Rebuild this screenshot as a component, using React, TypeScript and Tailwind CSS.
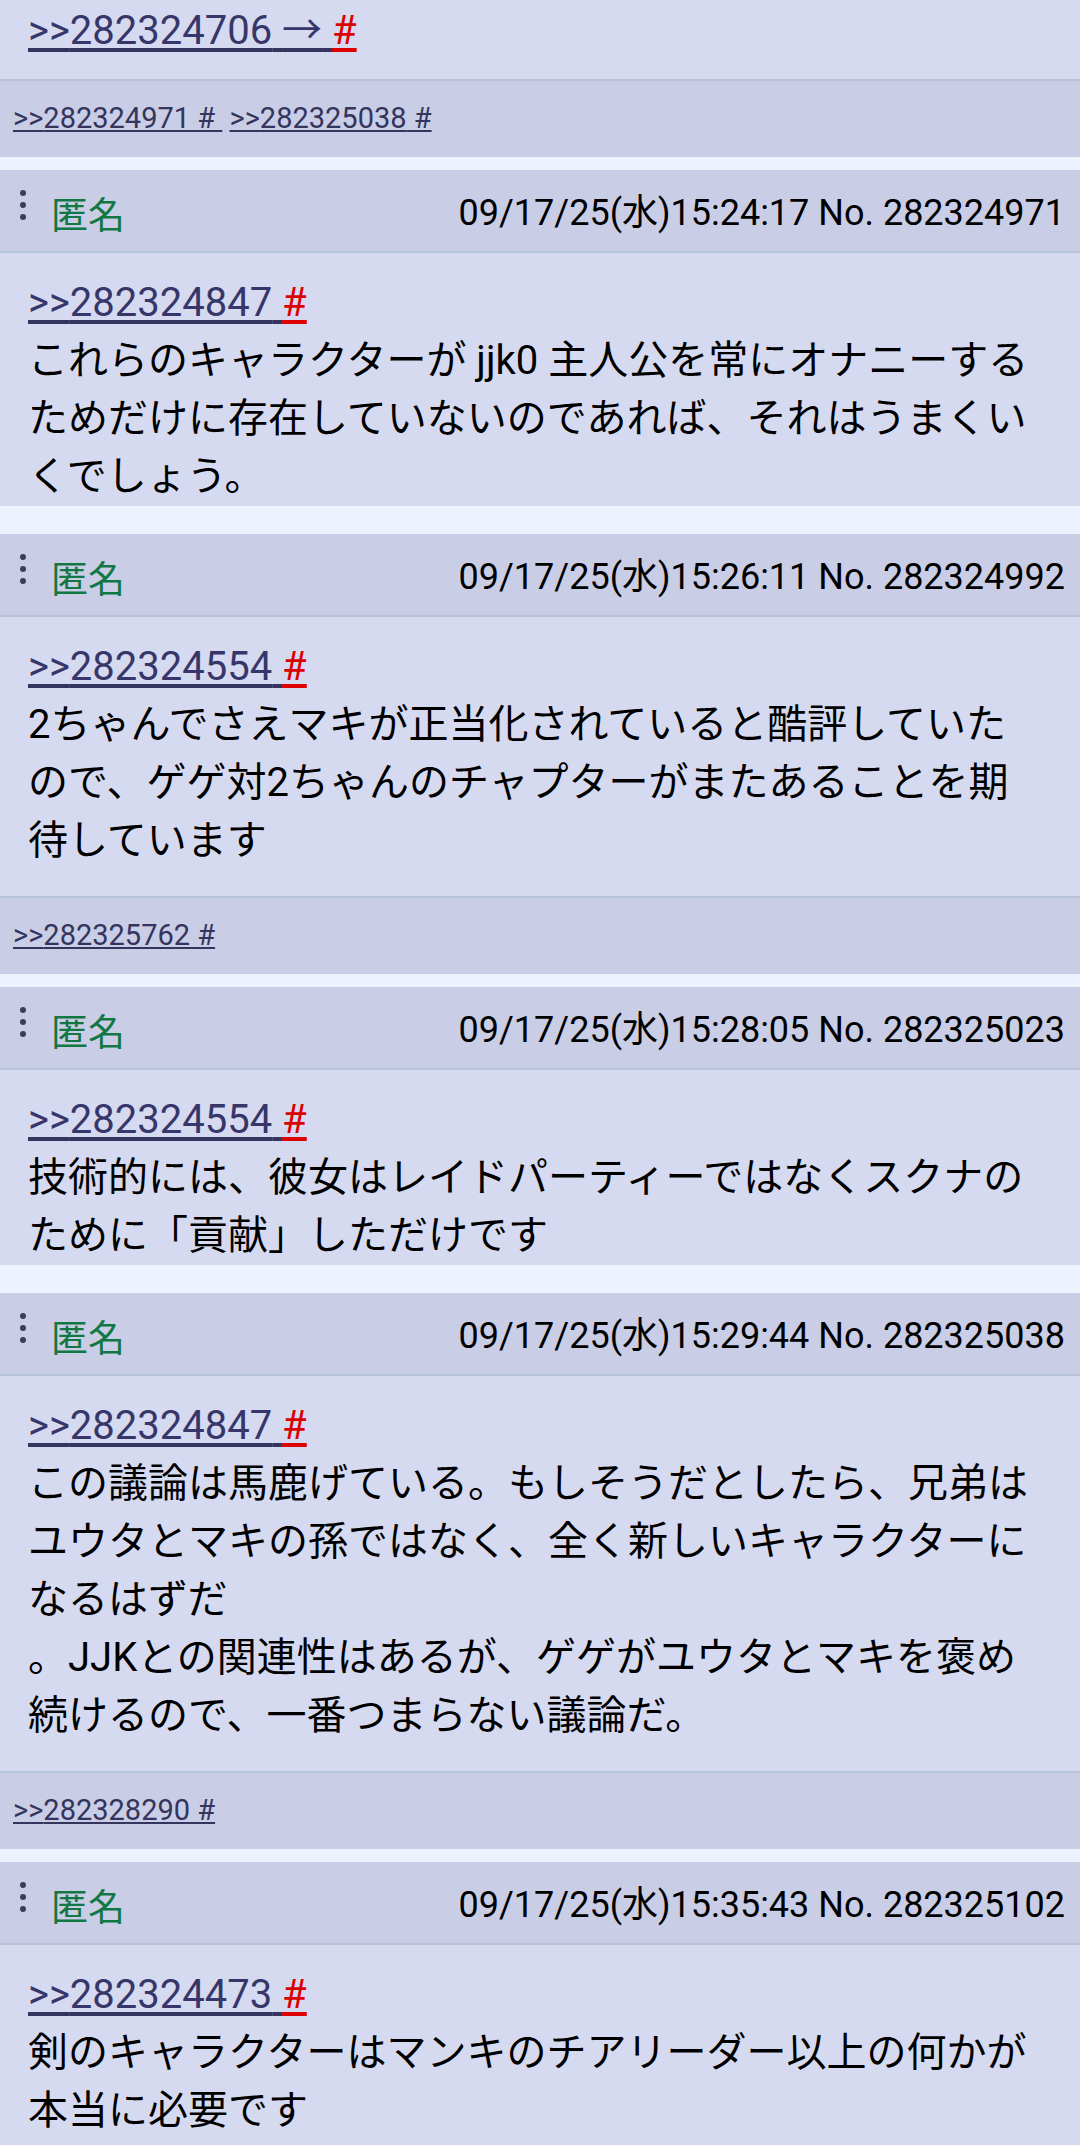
import React from "react";

type Post = {
  no: string;
  time: string;
  quote: string;
  lines: React.ReactNode;
  backlinks?: string[];
};

const posts: Post[] = [
  {
    no: "282324971",
    time: "09/17/25(水)15:24:17",
    quote: "282324847",
    lines: "これらのキャラクターが jjk0 主人公を常にオナニーするためだけに存在していないのであれば、それはうまくいくでしょう。",
  },
  {
    no: "282324992",
    time: "09/17/25(水)15:26:11",
    quote: "282324554",
    lines: "2ちゃんでさえマキが正当化されていると酷評していたので、ゲゲ対2ちゃんのチャプターがまたあることを期待しています",
    backlinks: ["282325762"],
  },
  {
    no: "282325023",
    time: "09/17/25(水)15:28:05",
    quote: "282324554",
    lines: "技術的には、彼女はレイドパーティーではなくスクナのために「貢献」しただけです",
  },
  {
    no: "282325038",
    time: "09/17/25(水)15:29:44",
    quote: "282324847",
    lines: (
      <>
        この議論は馬鹿げている。もしそうだとしたら、兄弟はユウタとマキの孫ではなく、全く新しいキャラクターになるはずだ
        <br />
        。JJKとの関連性はあるが、ゲゲがユウタとマキを褒め続けるので、一番つまらない議論だ。
      </>
    ),
    backlinks: ["282328290"],
  },
  {
    no: "282325102",
    time: "09/17/25(水)15:35:43",
    quote: "282324473",
    lines: "剣のキャラクターはマンキのチアリーダー以上の何かが本当に必要です",
  },
];

function QuoteLine({ id, arrow }: { id: string; arrow?: boolean }) {
  return (
    <div className="text-[40px] leading-[58px] whitespace-nowrap">
      <span className="text-[#36366a] underline decoration-4 underline-offset-4 decoration-[#34345c]">
        &gt;&gt;{id}
        {arrow ? (
          <>
            {" "}
            <span className="font-['Noto_Sans_CJK_JP',sans-serif]">→</span>
          </>
        ) : null}
        {"\u00a0"}
      </span>
      <span className="text-[#dd0000] underline decoration-4 underline-offset-4 decoration-[#dd0000]">#</span>
    </div>
  );
}

function Backlinks({ ids }: { ids: string[] }) {
  return (
    <div className="h-[78px] border-t-2 border-[#b7c5d9] bg-[#c9cde6] flex items-center pl-[13px] text-[29px] text-[#34345c] whitespace-nowrap">
      <div>
        {ids.map((id, i) => (
          <React.Fragment key={id}>
            {i > 0 ? " " : null}
            <span className="underline decoration-2 underline-offset-[2px]">
              &gt;&gt;{id} #{i < ids.length - 1 ? "\u00a0" : ""}
            </span>
          </React.Fragment>
        ))}
      </div>
    </div>
  );
}

function Header({ time, no }: { time: string; no: string }) {
  return (
    <div className="h-[83px] border-b-2 border-[#b7c5d9] bg-[#c9cde6] flex items-center pl-[20px] pr-[15px]">
      <div className="flex flex-col gap-[6px] -mt-[11px]">
        <div className="w-[6px] h-[6px] rounded-full bg-[#3c3c5e]" />
        <div className="w-[6px] h-[6px] rounded-full bg-[#3c3c5e]" />
        <div className="w-[6px] h-[6px] rounded-full bg-[#3c3c5e]" />
      </div>
      <div className="ml-[25px] mt-[5px] text-[37px] leading-[37px] text-[#117743] font-['Noto_Sans_CJK_JP',sans-serif]">
        匿名
      </div>
      <div className="ml-auto mt-[5px] text-[36px] leading-[36px] text-black whitespace-nowrap">
        {time} No. {no}
      </div>
    </div>
  );
}

export default function App() {
  return (
    <div className="w-[1080px] min-h-[2145px] bg-[#eef2ff] font-['Roboto','Noto_Sans_CJK_JP',sans-serif] overflow-hidden">
      {/* previous post tail */}
      <div className="bg-[#d6daf0] h-[79px] pl-[28px] pt-[1px]">
        <div className="-mt-[3px]">
          <QuoteLine id="282324706" arrow />
        </div>
      </div>
      <Backlinks ids={["282324971", "282325038"]} />
      <div className="h-[13px]" />

      {posts.map((p, idx) => {
        const last = idx === posts.length - 1;
        return (
          <div key={p.no}>
            <Header time={p.time} no={p.no} />
            <div
              className={
                "bg-[#d6daf0] pl-[28px] pr-[42px] pt-[21px] " +
                (p.backlinks ? "pb-[26px]" : last ? "pb-[40px]" : "pb-0")
              }
            >
              <QuoteLine id={p.quote} />
              <div className="text-[40px] leading-[58px] text-black">{p.lines}</div>
            </div>
            {p.backlinks ? <Backlinks ids={p.backlinks} /> : null}
            {!last ? <div className={p.backlinks ? "h-[13px]" : "h-[28px]"} /> : null}
          </div>
        );
      })}
    </div>
  );
}
